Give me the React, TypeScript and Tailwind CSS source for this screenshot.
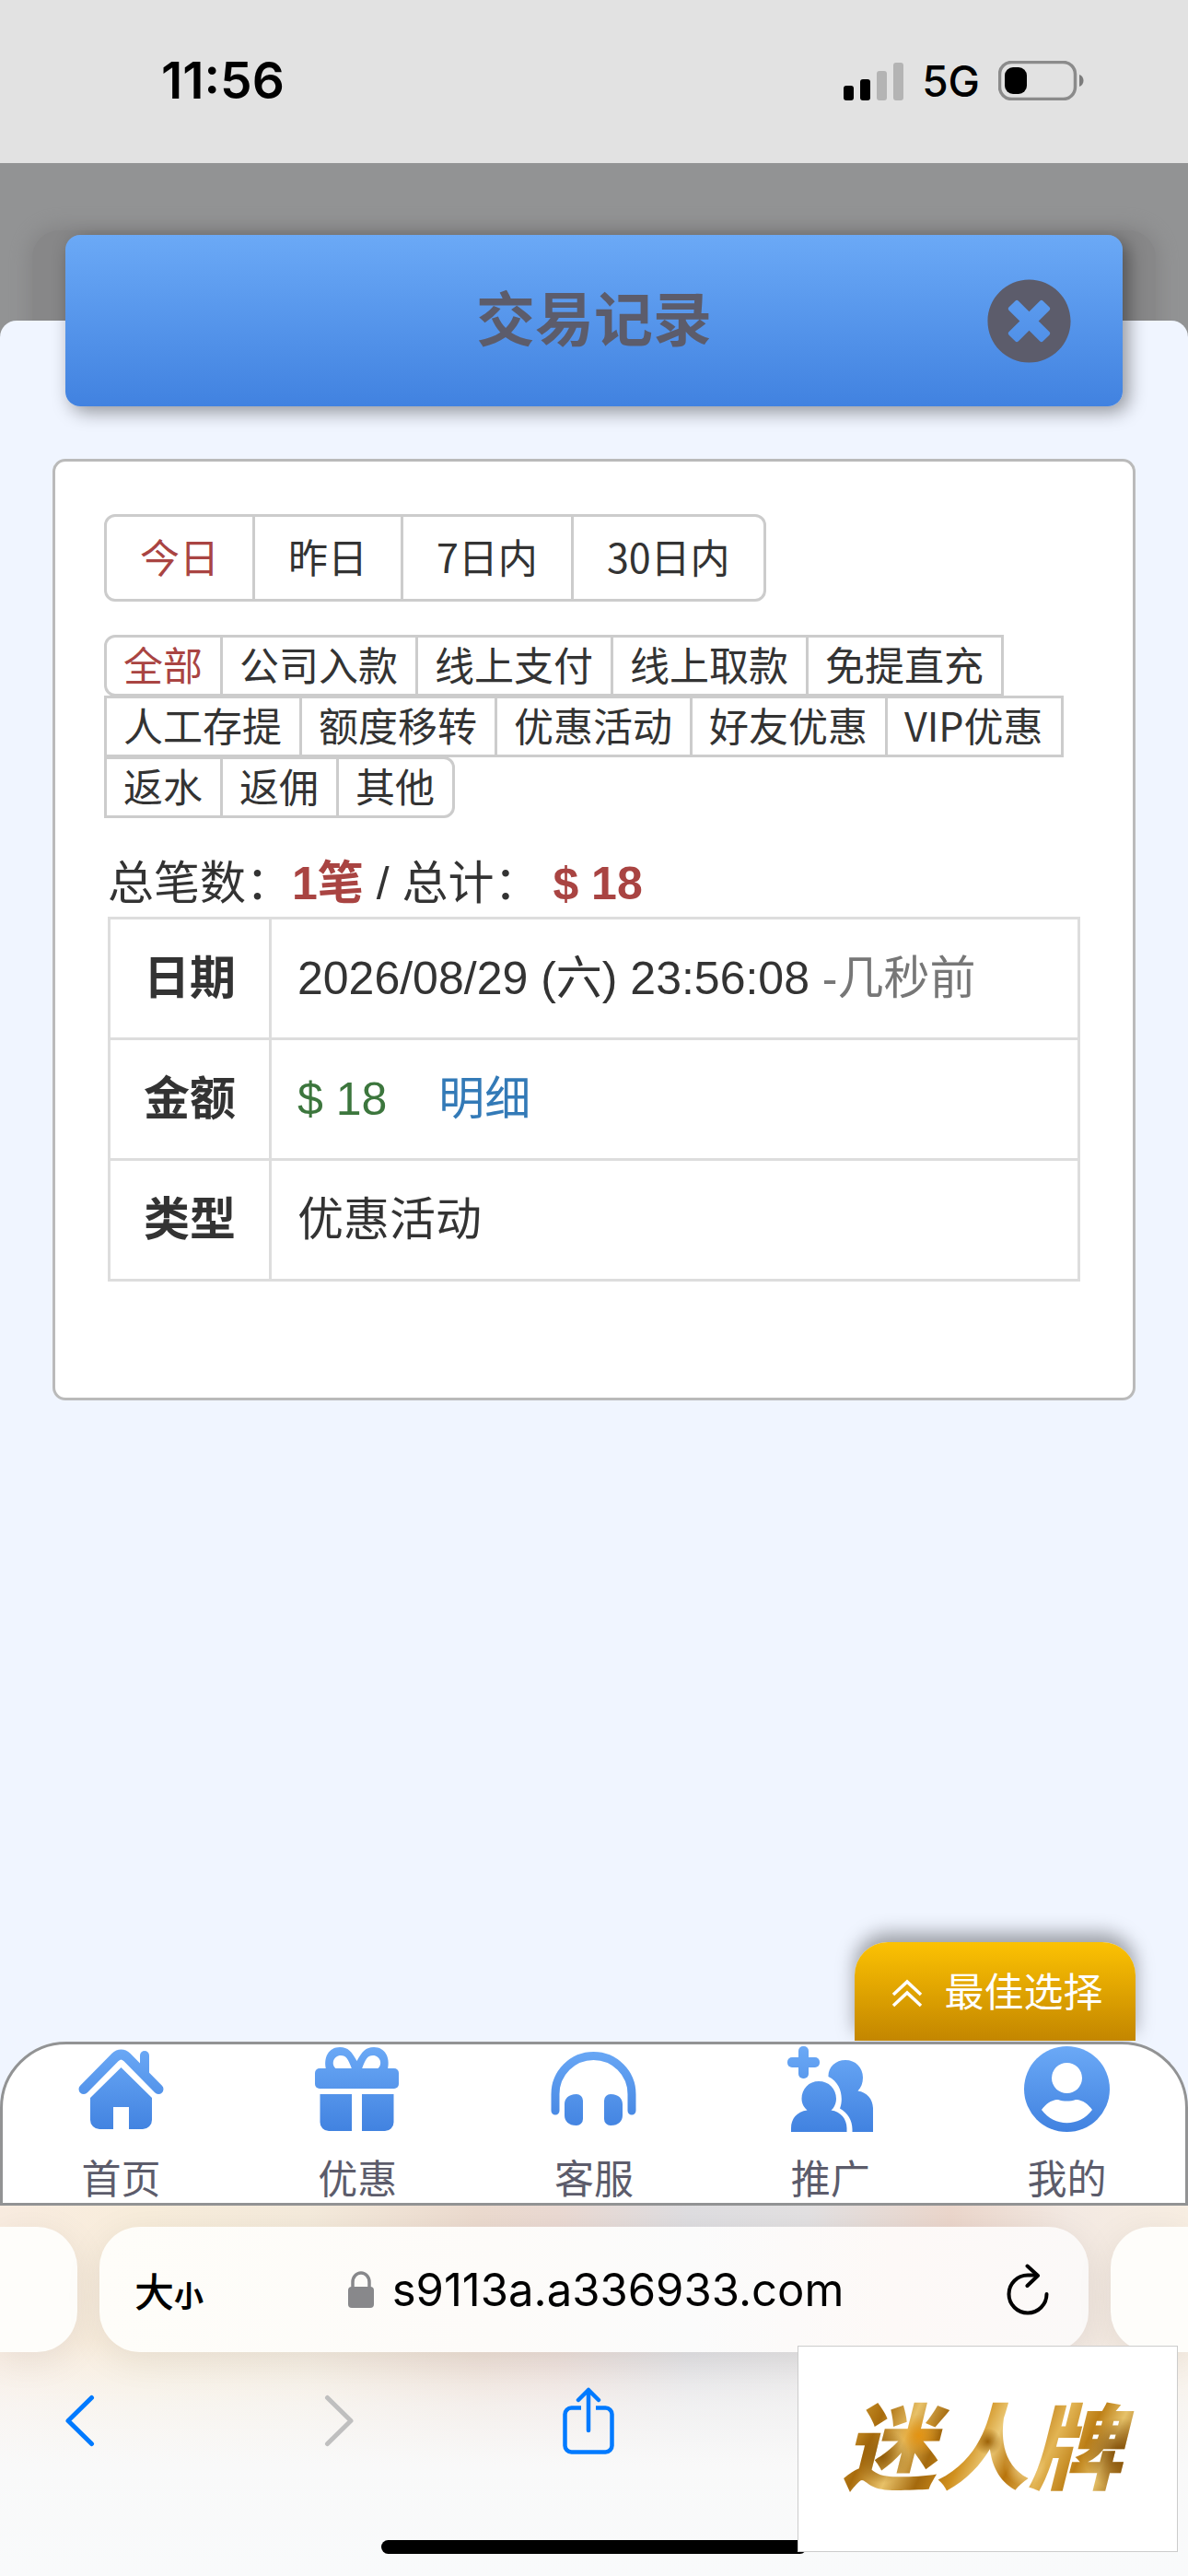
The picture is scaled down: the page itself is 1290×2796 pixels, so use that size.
import React, { FC, ReactNode } from "react";
import { FaTimesCircle } from "react-icons/fa";

const DATE_RANGES = ["今日", "昨日", "7日内", "30日内"];

const CATEGORIES = [
  "全部",
  "公司入款",
  "线上支付",
  "线上取款",
  "免提直充",
  "人工存提",
  "额度移转",
  "优惠活动",
  "好友优惠",
  "VIP优惠",
  "返水",
  "返佣",
  "其他",
];

const NavIcon: FC<{ id: string; children: ReactNode }> = ({ id, children }) => (
  <svg className="shrink-0" width="93" height="93" viewBox="0 0 93 93" aria-hidden="true">
    <defs>
      <linearGradient id={id} gradientUnits="userSpaceOnUse" x1="0" y1="0" x2="0" y2="93">
        <stop offset="0" stopColor="#6ba9f6" />
        <stop offset="1" stopColor="#4182e0" />
      </linearGradient>
    </defs>
    {children}
  </svg>
);

const NAV_ITEMS = [
  {
    label: "首页",
    icon: (
      <NavIcon id="navHome">
        <path
          d="M6 46.5 40 12Q46.5 6 53 12L87 46.5"
          fill="none"
          stroke="url(#navHome)"
          strokeWidth="11"
          strokeLinecap="round"
          strokeLinejoin="round"
        />
        <path d="M67 24V10a5 5 0 0 1 10 0v22z" fill="url(#navHome)" />
        <path
          d="M46.5 23 80 56v24a10 10 0 0 1-10 10H55V66H38v24H23a10 10 0 0 1-10-10V56z"
          fill="url(#navHome)"
        />
      </NavIcon>
    ),
  },
  {
    label: "优惠",
    icon: (
      <NavIcon id="navGift">
        <g fill="url(#navGift)">
          <path
            fillRule="evenodd"
            d="M12 25C9 12 15 1 27 1c9 0 13 5 18.5 15C51 6 55 1 64 1c12 0 18 11 15 24zM23 24.5h17C36 14 34 10 28 10c-8 0-11 10-5 14.5zM68 24.5c6-4.5 3-14.5-5-14.5-6 0-8 4-12 14.5z"
          />
          <rect x="0" y="24" width="91" height="22" rx="5" />
          <path d="M5.5 52H40v40H15a9.5 9.5 0 0 1-9.5-9.5zM51 52h34.5v30.5A9.5 9.5 0 0 1 76 92H51z" />
        </g>
      </NavIcon>
    ),
  },
  {
    label: "客服",
    icon: (
      <NavIcon id="navService">
        <path
          d="M5 70V52a41.5 41.5 0 0 1 83 0v18"
          fill="none"
          stroke="url(#navService)"
          strokeWidth="9"
          strokeLinecap="round"
        />
        <path
          d="M28 52a7 7 0 0 1 7 7v20a7 7 0 0 1-7 7c-9 0-13-5-13-11V63c0-6 4-11 13-11zM65 52a7 7 0 0 0-7 7v20a7 7 0 0 0 7 7c9 0 13-5 13-11V63c0-6-4-11-13-11z"
          fill="url(#navService)"
        />
      </NavIcon>
    ),
  },
  {
    label: "推广",
    icon: (
      <NavIcon id="navPromo">
        <g fill="url(#navPromo)">
          <rect x="0" y="12" width="35" height="11" rx="5" />
          <rect x="12" y="0" width="11" height="35" rx="5" />
          <path d="M44.5 33C44 23 52 15 63 15s19 8 19 19c0 6-2 11-5.5 14.5C87 50 93 58 93 68v25H70.5v-3c0-9-5-18-13.5-22.5C61 57 59 40 44.5 33z" />
          <path d="M34 38c11 0 19 8 19 19 0 5-2 9.5-5.5 12.5C58 71 64.5 79 64.5 89v4H4v-4c0-10 6-18 17.5-19.5C17.5 66 15.5 62 15.5 57c0-11 8-19 18.5-19z" />
        </g>
      </NavIcon>
    ),
  },
  {
    label: "我的",
    icon: (
      <NavIcon id="navMine">
        <circle cx="46.5" cy="46.5" r="46.5" fill="url(#navMine)" />
        <circle cx="46.5" cy="34.5" r="16.5" fill="#fff" />
        <path d="M19 69c6-8 12-11 18-11 6 2 13 2 19 0 6 0 12 3 18 11-14 19-41 19-55 0z" fill="#fff" />
      </NavIcon>
    ),
  },
];

const StatusBar: FC = () => (
  <div className="h-[177px] bg-[#e2e2e2] flex items-center justify-between pl-[175px] pr-[113px] pb-[2px] text-black font-['Inter',sans-serif]">
    <span className="text-[55px] leading-none font-semibold">11:56</span>
    <div className="flex items-center gap-5">
      <svg width="65" height="42" viewBox="0 0 65 42" aria-hidden="true">
        <rect x="0" y="26" width="11" height="16" rx="3" />
        <rect x="18" y="19" width="11" height="23" rx="3" />
        <rect x="36" y="10" width="11" height="32" rx="3" fill="#b4b4b4" />
        <rect x="54" y="1" width="11" height="41" rx="3" fill="#b4b4b4" />
      </svg>
      <span className="text-[46px] leading-none font-medium">5G</span>
      <svg width="93" height="43" viewBox="0 0 93 43" aria-hidden="true">
        <rect x="1.5" y="1.5" width="82" height="40" rx="13" fill="none" stroke="#8b8b8b" strokeWidth="3.5" />
        <rect x="7" y="7" width="24" height="29" rx="9" />
        <path d="M88 15c6 2 6 11 0 13z" fill="#7c7c7c" />
      </svg>
    </div>
  </div>
);

const Filters: FC = () => (
  <div className="-ml-1 text-[43px] text-[#333] font-['Noto_Sans_CJK_SC',sans-serif]">
    <div className="flex">
      {DATE_RANGES.map((item, index) => (
        <button
          key={item}
          type="button"
          className={`h-[95px] border-[3px] border-[#ccc] px-9 pb-1 leading-none first:rounded-l-xl last:rounded-r-xl ${
            index === 0 ? "text-[#a94442]" : "-ml-[3px]"
          }`}
        >
          {item}
        </button>
      ))}
    </div>
    <div className="mt-9 flex flex-wrap pl-[3px] pt-px">
      {CATEGORIES.map((item, index) => (
        <button
          key={item}
          type="button"
          className={`-ml-[3px] -mt-px h-[67px] border-[3px] border-[#ccc] pl-[18px] pr-[19px] pb-1 leading-none first:rounded-l-xl last:rounded-r-xl ${
            index === 0 ? "text-[#a94442]" : ""
          }`}
        >
          {item}
        </button>
      ))}
    </div>
  </div>
);

const RecordTable: FC = () => (
  <table className="w-full border-collapse text-[50px] leading-[64px] text-[#333] [&_td]:h-[131px] [&_td]:border-[3px] [&_td]:border-[#ddd] [&_td]:pl-7 [&_th]:w-[175px] [&_th]:border-[3px] [&_th]:border-[#ddd] [&_th]:font-bold">
    <tbody>
      <tr>
        <th scope="row">日期</th>
        <td>
          2026/08/29 (六) 23:56:08 <span className="text-[#777]">-几秒前</span>
        </td>
      </tr>
      <tr>
        <th scope="row">金额</th>
        <td>
          <span className="text-[#3c763d]">$ 18</span>
          <a href="#detail" className="ml-14 text-[#337ab7]">
            明细
          </a>
        </td>
      </tr>
      <tr>
        <th scope="row">类型</th>
        <td>优惠活动</td>
      </tr>
    </tbody>
  </table>
);

const BottomNav: FC = () => (
  <nav className="flex h-[178px] rounded-t-[72px] border-[3px] border-[#929394] bg-white">
    {NAV_ITEMS.map(({ label, icon }) => (
      <a
        key={label}
        href="#nav"
        className="flex flex-1 flex-col items-center gap-7 pt-[2px] text-[43px] leading-[48px] text-[#5c5c6b]"
      >
        {icon}
        <span>{label}</span>
      </a>
    ))}
  </nav>
);

const BrowserBar: FC = () => (
  <footer className="relative h-[402px] overflow-hidden bg-[linear-gradient(to_bottom,transparent_0%,transparent_36%,rgba(248,248,248,0.7)_54%,#f9f9f9_70%,#f9fafb_100%),linear-gradient(to_right,#f9ece0_0%,#f8eddb_12%,#f5ebdc_26%,#ecdbcf_40%,#ebdad3_47%,#dfdee1_58%,#e3e1e2_68%,#ecd7cc_80%,#f3e9e2_90%,#f8eee2_100%)] font-['Inter','Noto_Sans_CJK_SC',sans-serif]">
    <div className="mt-[23px] flex h-[136px] gap-6">
      <div className="w-[84px] rounded-r-[44px] bg-[#fefdfa] shadow-[0_8px_40px_rgba(0,0,0,0.08)]" />
      <div className="flex flex-1 items-center justify-between rounded-[44px] bg-[linear-gradient(to_right,#fefdf9,#fdfbf9_40%,#fbfbfb_60%,#fdf9f7_80%,#fbf9f8)] pl-[38px] pr-[43px] text-black shadow-[0_8px_40px_rgba(0,0,0,0.08)]">
        <button
          type="button"
          className="flex items-baseline font-['Noto_Sans_CJK_SC',sans-serif] font-medium leading-none"
        >
          <span className="text-[43px]">大</span>
          <span className="text-[32px] font-bold">小</span>
        </button>
        <div className="flex items-center gap-5 pr-5 text-[49px] leading-none">
          <svg width="28" height="40" viewBox="0 0 28 40" aria-hidden="true">
            <path d="M5 18v-6a9 10 0 0 1 18 0v6" fill="none" stroke="#88888b" strokeWidth="3.5" />
            <rect x="0" y="17" width="28" height="23" rx="4" fill="#88888b" />
          </svg>
          <span>s9113a.a336933.com</span>
        </div>
        <button type="button" aria-label="reload">
          <svg
            width="46"
            height="56"
            viewBox="0 0 46 56"
            fill="none"
            stroke="#000"
            strokeWidth="4"
            strokeLinecap="round"
            strokeLinejoin="round"
          >
            <path d="M43.5 33A20.5 20.5 0 1 1 23 12.5h10" />
            <path d="M22.5 2.5 34 13 22.5 24" />
          </svg>
        </button>
      </div>
      <div className="w-[84px] rounded-l-[44px] bg-[#fefdfa] shadow-[0_8px_40px_rgba(0,0,0,0.08)]" />
    </div>
    <div className="mt-8 flex h-[84px] items-center justify-between pl-[70px] pr-[108px]">
      <button type="button" aria-label="back" className="w-14">
        <svg
          width="33"
          height="57"
          viewBox="0 0 33 57"
          fill="none"
          stroke="#007aff"
          strokeWidth="5"
          strokeLinecap="round"
          strokeLinejoin="round"
        >
          <path d="M29.5 3.5 4 28.5l25.5 25" />
        </svg>
      </button>
      <button type="button" aria-label="forward">
        <svg
          width="33"
          height="57"
          viewBox="0 0 33 57"
          fill="none"
          stroke="#bfbfbf"
          strokeWidth="5"
          strokeLinecap="round"
          strokeLinejoin="round"
        >
          <path d="m3.5 3.5 25.5 25-25.5 25" />
        </svg>
      </button>
      <button type="button" aria-label="share">
        <svg width="56" height="73" viewBox="0 0 56 73" fill="none" stroke="#007aff" strokeWidth="4.5" strokeLinejoin="round">
          <path d="M20 22.5H9.5a7 7 0 0 0-7 7v34a7 7 0 0 0 7 7h37a7 7 0 0 0 7-7v-34a7 7 0 0 0-7-7H36" />
          <path d="M28 47V3M17 14 28 3l11 11" strokeLinecap="round" />
        </svg>
      </button>
      <span className="w-16" />
      <span />
    </div>
    <div className="absolute bottom-6 left-1/2 h-[15px] w-[462px] -translate-x-1/2 rounded-full bg-black" />
    <div className="absolute bottom-[26px] right-[11px] flex h-[224px] w-[413px] items-center justify-center border border-[#ccc] bg-white pb-4">
      <span className="bg-[radial-gradient(circle_at_16%_62%,#8f5a08_0%,transparent_10%),radial-gradient(circle_at_28%_45%,#e39312_0%,transparent_9%),radial-gradient(circle_at_50%_50%,#9c6208_0%,transparent_8%),radial-gradient(circle_at_62%_70%,#f6dc98_0%,transparent_10%),radial-gradient(circle_at_92%_60%,#7d4a05_0%,transparent_12%),linear-gradient(115deg,#a86c10_0%,#cf9a30_9%,#a86b0c_18%,#e8c168_27%,#a4690d_36%,#d0901f_45%,#ecca78_52%,#b8740c_59%,#e3b554_68%,#bd7f16_77%,#e6c26a_84%,#9a5f08_92%,#cf9628_100%)] bg-clip-text pl-3 pr-6 font-['Noto_Sans_CJK_SC',sans-serif] text-[101px] font-black italic leading-[130px] text-transparent">
        迷人牌
      </span>
    </div>
  </footer>
);

const App: FC = () => {
  return (
    <div className="flex min-h-screen flex-col bg-[#929394] font-['Liberation_Sans','Noto_Sans_CJK_SC',sans-serif]">
      <StatusBar />

      <div className="relative h-[171px] overflow-hidden">
        <div className="absolute inset-x-[35px] top-[73px] h-[200px] rounded-[30px] bg-[#878788] shadow-[0_0_18px_6px_#878788]" />
      </div>

      <main className="flex flex-1 flex-col rounded-t-[18px] bg-[#f0f5ff]">
        <header className="relative z-10 mx-[71px] -mt-[93px] flex h-[186px] items-center justify-center rounded-2xl bg-linear-to-b from-[#6ba9f6] to-[#4182e0] text-[#5c5c6b] shadow-[6px_6px_20px_rgba(0,0,0,0.4)]">
          <h1 className="text-[64px] font-bold leading-none">交易记录</h1>
          <button type="button" aria-label="close" className="absolute right-[55px]">
            <FaTimesCircle size={93} />
          </button>
        </header>

        <section className="mx-[57px] mt-[57px] rounded-[14px] border-[3px] border-[#bababa] bg-white px-[57px] pb-[126px] pt-[57px]">
          <Filters />
          <p className="mt-9 text-[50px] leading-[71px] text-[#333]">
            总笔数：<b className="text-[#a94442]">1笔</b> / 总计： <b className="text-[#a94442]">$ 18</b>
          </p>
          <RecordTable />
        </section>

        <button
          type="button"
          className="mb-px ml-auto mr-[57px] mt-auto flex h-[107px] w-[305px] items-center justify-center gap-6 rounded-t-[36px] bg-linear-to-b from-[#fcc203] to-[#c38600] pl-1 pt-1 text-[43px] leading-none text-white shadow-[0_-10px_20px_rgba(0,0,0,0.35)]"
        >
          <svg width="34" height="31" viewBox="0 0 34 31" fill="none" stroke="#fff" strokeWidth="3.5" aria-hidden="true">
            <path d="M2 17 17 3l15 14M2 29l15-14 15 14" />
          </svg>
          最佳选择
        </button>
        <BottomNav />
      </main>

      <BrowserBar />
    </div>
  );
};

export default App;
